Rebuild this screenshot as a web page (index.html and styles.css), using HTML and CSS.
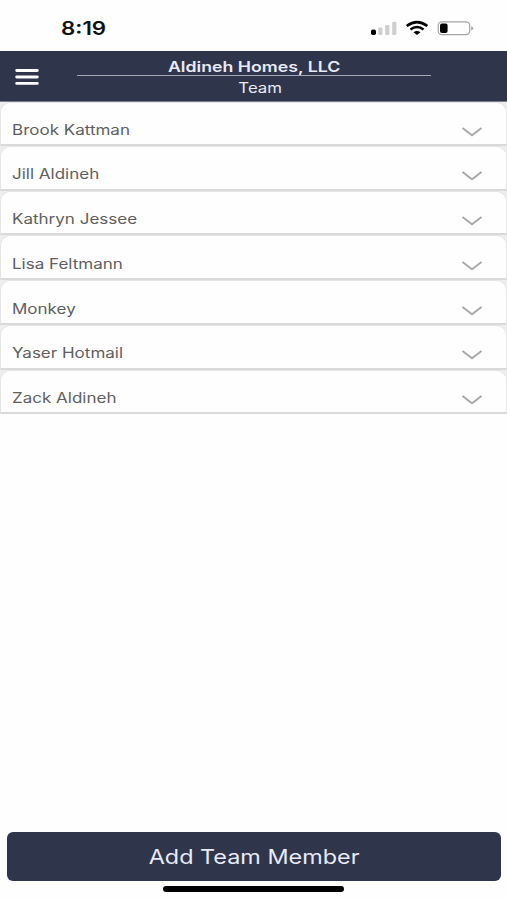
FILE: index.html
```html
<!DOCTYPE html>
<html lang="en">
<head>
<meta charset="utf-8">
<title>Team</title>
<link rel="stylesheet" href="styles.css">
</head>
<body>
<div class="status">
  <span class="time">8:19</span>
  <svg class="indicators" width="104" height="18" viewBox="0 0 104 18">
    <rect x="1" y="9.5" width="5" height="5.5" rx="1.8" fill="#000"/>
    <g fill="#cfcfcf"><rect x="8.3" y="7.5" width="4.2" height="7.5" rx="1.2"/><rect x="15.2" y="5" width="4.2" height="10" rx="1.2"/><rect x="22.2" y="1.8" width="4.2" height="13.2" rx="1.2"/></g>
    <g fill="none" stroke="#000" stroke-width="2.5"><path d="M36.7 6Q47 -1.8 57.3 6"/><path d="M40.4 9.5Q47 4.5 53.6 9.5"/></g>
    <path d="M43.5 12.2Q47 9.6 50.5 12.2L47 15z" fill="#000"/>
    <rect x="68.2" y="1.9" width="31.5" height="12.8" rx="3.6" fill="none" stroke="#a5a5a5" stroke-width="1.2"/>
    <rect x="70" y="3.5" width="7.6" height="9.6" rx="2" fill="#000"/>
    <path d="M101.2 6.2Q103.2 6.7 103.2 8.3T101.2 10.4z" fill="#a5a5a5"/>
  </svg>
</div>
<header class="header">
  <svg class="menu" width="24" height="18" viewBox="0 0 24 18"><path d="M1.7 2.5H22.3M1.7 9H22.3M1.7 15.4H22.3"/></svg>
  <div class="titles">
    <div class="company"><span>Aldineh Homes, LLC</span></div>
    <div class="page"><span>Team</span></div>
  </div>
</header>
<main class="list">
  <div class="row"><span class="name">Brook Kattman</span><svg class="chevron" viewBox="0 0 22 12"><path d="M1.5 2L11 9.3L20.5 2"/></svg></div>
  <div class="row"><span class="name">Jill Aldineh</span><svg class="chevron" viewBox="0 0 22 12"><path d="M1.5 2L11 9.3L20.5 2"/></svg></div>
  <div class="row"><span class="name">Kathryn Jessee</span><svg class="chevron" viewBox="0 0 22 12"><path d="M1.5 2L11 9.3L20.5 2"/></svg></div>
  <div class="row"><span class="name">Lisa Feltmann</span><svg class="chevron" viewBox="0 0 22 12"><path d="M1.5 2L11 9.3L20.5 2"/></svg></div>
  <div class="row"><span class="name">Monkey</span><svg class="chevron" viewBox="0 0 22 12"><path d="M1.5 2L11 9.3L20.5 2"/></svg></div>
  <div class="row"><span class="name">Yaser Hotmail</span><svg class="chevron" viewBox="0 0 22 12"><path d="M1.5 2L11 9.3L20.5 2"/></svg></div>
  <div class="row"><span class="name">Zack Aldineh</span><svg class="chevron" viewBox="0 0 22 12"><path d="M1.5 2L11 9.3L20.5 2"/></svg></div>
</main>
<footer class="footer">
  <button class="add"><span>Add Team Member</span></button>
  <div class="home"></div>
</footer>
</body>
</html>
```
FILE: styles.css
```css
* { box-sizing: border-box; }
body {
  margin: 0;
  height: 900px;
  display: flex;
  flex-direction: column;
  background: #fefefe;
  font-family: Inter, "Liberation Sans", sans-serif;
  overflow: hidden;
}
.status {
  height: 51px;
  flex: none;
  display: flex;
  justify-content: space-between;
  align-items: flex-start;
  padding: 20px 33px 0 60.5px;
}
.time {
  font-size: 18px;
  line-height: 18px;
  font-weight: 600;
  color: #111;
  transform: scaleX(1.24);
  transform-origin: left;
}
.header {
  height: 51px;
  flex: none;
  display: flex;
  align-items: center;
  padding-left: 15px;
  background: #2f354b;
  border-bottom: 1px solid #777b8b;
}
.menu {
  margin-top: 1px;
  stroke: #fff;
  stroke-width: 2.9;
  stroke-linecap: round;
}
.titles {
  width: 354px;
  margin-left: 38px;
  text-align: center;
  color: #e9ebf8;
}
.titles span, .add span { display: inline-block; }
.company {
  height: 22px;
  padding-top: 5px;
  border-bottom: 1px solid #a3a7b5;
  font-size: 14px;
  line-height: 16px;
  font-weight: 600;
}
.company span { transform: scaleX(1.265); }
.page {
  height: 22px;
  padding-left: 12px;
  font-size: 14px;
  line-height: 24px;
}
.page span { transform: scaleX(1.2); }
.list { background: #eee; }
.row {
  height: 44.75px;
  display: flex;
  align-items: center;
  justify-content: space-between;
  padding: 13.5px 23px 0 11px;
  border: 1px solid #e5e5e5;
  border-bottom: 2px solid #d9d9d9;
  border-radius: 10px 10px 0 0;
  background: #fefefe;
}
.row:first-child { height: 43.75px; }
.name {
  font-size: 14px;
  line-height: 20px;
  color: #606060;
  transform: scaleX(1.215);
  transform-origin: left;
}
.chevron {
  width: 22px;
  height: 12px;
  margin-top: 4px;
  fill: none;
  stroke: #a8a8a8;
  stroke-width: 1.9;
}
.footer { margin-top: auto; padding: 0 7px 8px; }
.add {
  display: block;
  width: 494px;
  height: 49px;
  padding: 0;
  border: 0;
  border-radius: 6px;
  background: #2f354b;
  color: #e9ebf8;
  font: 400 20px/50px Inter, "Liberation Sans", sans-serif;
}
.add span { transform: scaleX(1.17); }
.home {
  width: 181px;
  height: 6px;
  margin: 5px auto 0;
  border-radius: 3px;
  background: #000;
}
```
